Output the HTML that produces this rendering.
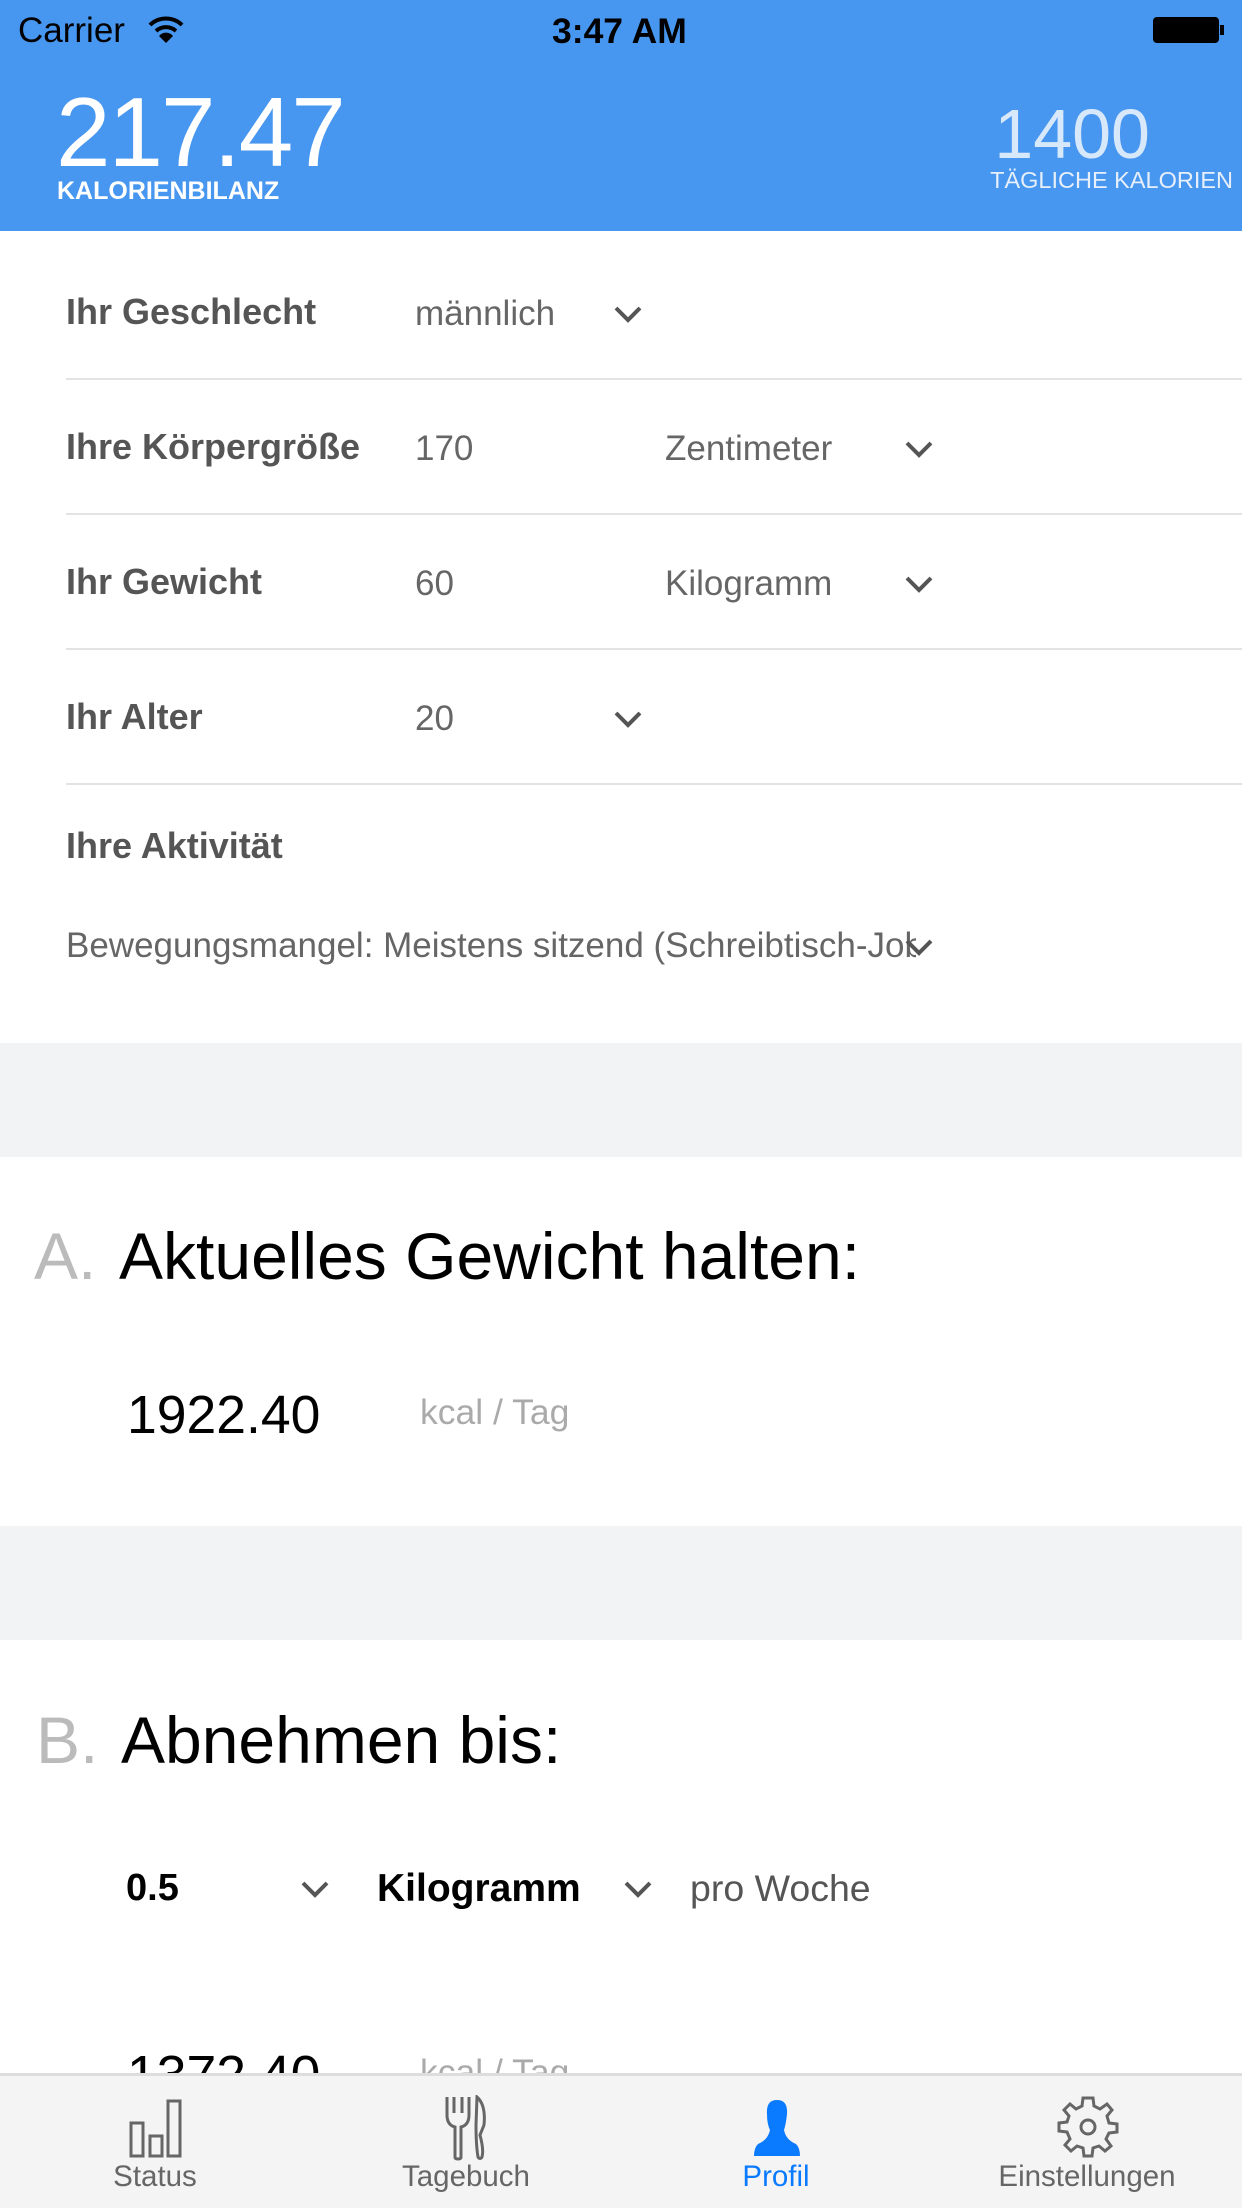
<!DOCTYPE html>
<html><head><meta charset="utf-8"><style>
*{margin:0;padding:0;box-sizing:border-box}
body{width:1242px;height:2208px;overflow:hidden;background:#fff;font-family:"Liberation Sans",sans-serif;position:relative}
.a{position:absolute;white-space:nowrap}
.hdr{position:absolute;left:0;top:0;width:1242px;height:231px;background:#4796ef}
.lbl{font-size:36px;font-weight:bold;color:#555}
.val{font-size:35px;color:#666}
.sep{position:absolute;left:66px;right:0;height:2px;background:#e3e3e3}
.band{position:absolute;left:0;width:1242px;background:#f2f3f5}
.chev{position:absolute;width:30px;height:18px}
.tab{position:absolute;font-size:29.5px;color:#666;text-align:center;width:260px}
</style></head><body>
<div class="hdr"></div>
<div class="a" style="left:18px;top:11px;font-size:35px;color:#000">Carrier</div>
<svg class="a" style="left:148px;top:16px" width="36" height="28" viewBox="0 0 36 28"><path d="M2 9 A23 23 0 0 1 34 9" stroke="#000" stroke-width="4" fill="none"/><path d="M8 15 A15 15 0 0 1 28 15" stroke="#000" stroke-width="4" fill="none"/><path d="M18 27 L11 20 A9 9 0 0 1 25 20 Z" fill="#000"/></svg>
<div class="a" style="left:552px;top:11px;font-size:35.5px;font-weight:bold;color:#000">3:47 AM</div>
<div class="a" style="left:1153px;top:17px;width:66px;height:26px;background:#000;border-radius:4px"></div>
<div class="a" style="left:1220px;top:25px;width:4px;height:10px;background:#000"></div>
<div class="a" style="left:56px;top:76px;font-size:98px;font-weight:300;color:#fff;letter-spacing:-2px">217.47</div>
<div class="a" style="left:57px;top:177px;font-size:25px;font-weight:bold;color:#fff">KALORIENBILANZ</div>
<div class="a" style="right:92px;top:94px;font-size:70px;color:#d8e8fb">1400</div>
<div class="a" style="right:9px;top:167px;font-size:23.5px;color:#e6effa">TÄGLICHE KALORIEN</div>

<div class="a lbl" style="left:66px;top:291px">Ihr Geschlecht</div>
<div class="a val" style="left:415px;top:294px">männlich</div>
<div class="sep" style="top:378px"></div>
<div class="a lbl" style="left:66px;top:426px">Ihre Körpergröße</div>
<div class="a val" style="left:415px;top:429px">170</div>
<div class="a val" style="left:665px;top:429px">Zentimeter</div>
<div class="sep" style="top:513px"></div>
<div class="a lbl" style="left:66px;top:561px">Ihr Gewicht</div>
<div class="a val" style="left:415px;top:564px">60</div>
<div class="a val" style="left:665px;top:564px">Kilogramm</div>
<div class="sep" style="top:648px"></div>
<div class="a lbl" style="left:66px;top:696px">Ihr Alter</div>
<div class="a val" style="left:415px;top:699px">20</div>
<div class="sep" style="top:783px"></div>
<div class="a lbl" style="left:66px;top:825px">Ihre Aktivität</div>
<div class="a val" style="left:66px;top:926px;width:850px;overflow:hidden">Bewegungsmangel: Meistens sitzend (Schreibtisch-Job)</div>

<svg class="chev" style="left:613px;top:305px" viewBox="0 0 30 18"><path d="M3 3 L15 15 L27 3" stroke="#555" stroke-width="4" fill="none"/></svg>
<svg class="chev" style="left:904px;top:440px" viewBox="0 0 30 18"><path d="M3 3 L15 15 L27 3" stroke="#555" stroke-width="4" fill="none"/></svg>
<svg class="chev" style="left:904px;top:575px" viewBox="0 0 30 18"><path d="M3 3 L15 15 L27 3" stroke="#555" stroke-width="4" fill="none"/></svg>
<svg class="chev" style="left:613px;top:710px" viewBox="0 0 30 18"><path d="M3 3 L15 15 L27 3" stroke="#555" stroke-width="4" fill="none"/></svg>
<svg class="chev" style="left:904px;top:938px" viewBox="0 0 30 18"><path d="M3 3 L15 15 L27 3" stroke="#555" stroke-width="4" fill="none"/></svg>

<div class="band" style="top:1043px;height:114px"></div>
<div class="a" style="left:34px;top:1218px;font-size:66px;color:#bbb">A.</div>
<div class="a" style="left:119px;top:1218px;font-size:66px;color:#000">Aktuelles Gewicht halten:</div>
<div class="a" style="left:127px;top:1385px;font-size:53.5px;color:#000">1922.40</div>
<div class="a" style="left:420px;top:1392px;font-size:35.5px;color:#aaa">kcal / Tag</div>
<div class="band" style="top:1526px;height:114px"></div>
<div class="a" style="left:36px;top:1702px;font-size:66px;color:#bbb">B.</div>
<div class="a" style="left:121px;top:1702px;font-size:66px;color:#000">Abnehmen bis:</div>
<div class="a" style="left:126px;top:1867px;font-size:38px;font-weight:bold;color:#000">0.5</div>
<div class="a" style="left:377px;top:1867px;font-size:39px;font-weight:bold;color:#000">Kilogramm</div>
<div class="a" style="left:690px;top:1867px;font-size:37.5px;color:#555">pro Woche</div>
<svg class="chev" style="left:300px;top:1880px" viewBox="0 0 30 18"><path d="M3 3 L15 15 L27 3" stroke="#555" stroke-width="4" fill="none"/></svg>
<svg class="chev" style="left:623px;top:1880px" viewBox="0 0 30 18"><path d="M3 3 L15 15 L27 3" stroke="#555" stroke-width="4" fill="none"/></svg>
<div class="a" style="left:127px;top:2045px;font-size:53.5px;color:#000">1372.40</div>
<div class="a" style="left:420px;top:2052px;font-size:35.5px;color:#aaa">kcal / Tag</div>

<div class="a" style="left:0;top:2073px;width:1242px;height:135px;background:#f4f4f4;border-top:3px solid #ddd"></div>
<svg class="a" style="left:128px;top:2098px" width="56" height="60" viewBox="0 0 56 60"><rect x="3" y="25" width="12" height="33" fill="none" stroke="#666" stroke-width="3"/><rect x="22" y="38" width="12" height="20" fill="none" stroke="#666" stroke-width="3"/><rect x="40" y="3" width="12" height="55" fill="none" stroke="#666" stroke-width="3"/></svg>
<svg class="a" style="left:444px;top:2095px" width="44" height="66" viewBox="0 0 44 66"><path d="M3 2 V20 Q3 30 11 32 V62 Q11 64 14 64 Q17 64 17 62 V32 Q25 30 25 20 V2 M10 2 V18 M18 2 V18" fill="none" stroke="#666" stroke-width="3"/><path d="M33 2 Q42 10 40 30 L36 40 Q40 55 38 62 Q36 65 34 62 Q32 50 32 30 Z" fill="none" stroke="#666" stroke-width="3"/></svg>
<svg class="a" style="left:752px;top:2098px" width="50" height="60" viewBox="0 0 50 60"><path d="M25 2 Q36 2 35 16 Q34 26 32 32 Q34 42 44 46 Q48 50 48 58 H2 Q2 50 6 46 Q16 42 18 32 Q15 26 15 16 Q14 2 25 2 Z" fill="#0a7aff"/></svg>
<svg class="a" style="left:1057px;top:2096px" width="62" height="62" viewBox="-31 -31 62 62"><path d="M-5 -29 H5 L6 -21 L12 -18 L19 -23 L24 -17 L19 -11 L21 -4 L29 -3 V5 L21 6 L18 12 L23 19 L17 24 L11 19 L5 21 L4 29 H-4 L-5 21 L-11 19 L-17 24 L-23 18 L-18 12 L-21 5 L-29 4 V-4 L-21 -5 L-19 -11 L-24 -17 L-18 -23 L-12 -18 L-6 -21 Z" fill="none" stroke="#666" stroke-width="3"/><circle r="7" fill="none" stroke="#666" stroke-width="3"/></svg>
<div class="tab" style="left:25px;top:2160px">Status</div>
<div class="tab" style="left:336px;top:2160px">Tagebuch</div>
<div class="tab" style="left:646px;top:2160px;color:#0a7aff">Profil</div>
<div class="tab" style="left:957px;top:2160px">Einstellungen</div>
</body></html>
